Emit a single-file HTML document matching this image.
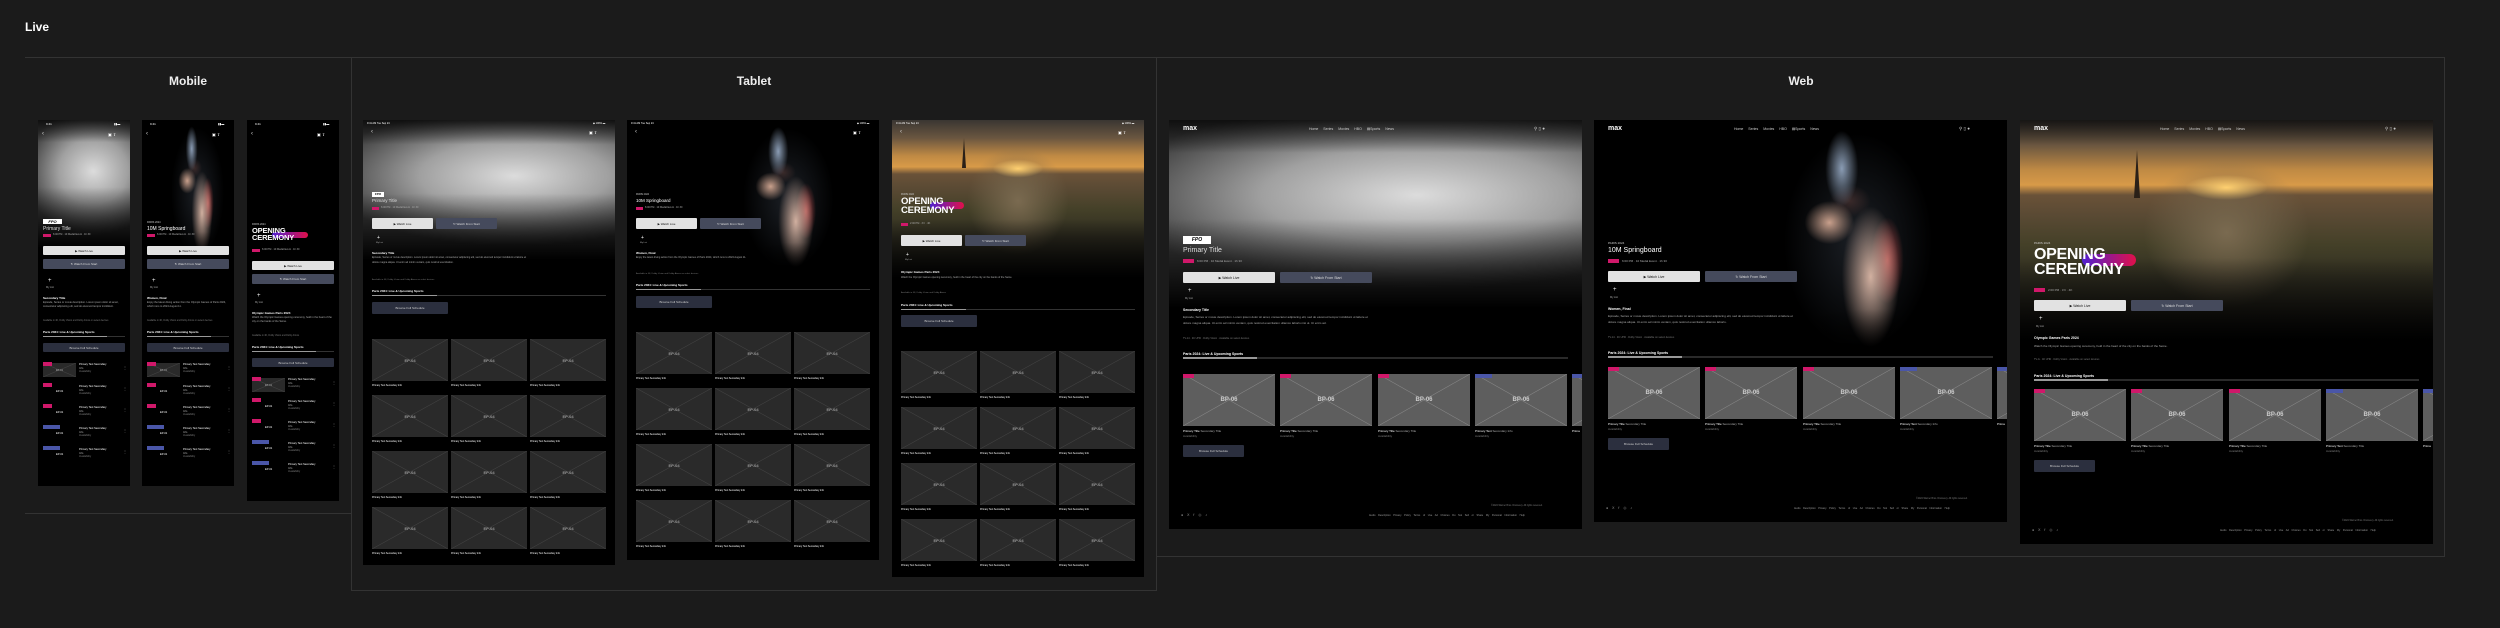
<!DOCTYPE html>
<html><head><meta charset="utf-8"><style>
body{margin:0;width:2500px;height:628px;background:#1b1b1b;position:relative;overflow:hidden;font-family:"Liberation Sans",sans-serif;color:#fff}
.a{position:absolute;white-space:nowrap}
.f{position:absolute;background:#000;overflow:hidden}
.box{position:absolute;border:1px solid #333}
.h{position:absolute;font-size:12px;font-weight:bold;color:#eee;transform:translateX(-50%)}
.gray{background:linear-gradient(180deg,rgba(0,0,0,.75) 0,rgba(0,0,0,0) 14%,rgba(0,0,0,0) 42%,#000 80%),radial-gradient(ellipse 75% 40% at 60% 32%,#dcdcdc,#a0a0a0 50%,#3a3a3a 100%)}
.diver{background:linear-gradient(180deg,rgba(0,0,0,0) 70%,#000 95%),radial-gradient(ellipse 4% 14% at 60% 18%,#8a9cb4,rgba(0,0,0,0) 100%),radial-gradient(ellipse 6% 8% at 57% 38%,#c9a08c,rgba(0,0,0,0) 100%),radial-gradient(ellipse 5% 6% at 62% 30%,#3a2a2a,rgba(0,0,0,0) 100%),radial-gradient(ellipse 7% 26% at 67% 58%,#d2b0a0,rgba(0,0,0,0) 100%),radial-gradient(ellipse 4% 16% at 71% 52%,#b04848,rgba(0,0,0,0) 100%),radial-gradient(ellipse 18% 40% at 64% 45%,#1c2026,#000 100%)}
.paris{background:linear-gradient(180deg,rgba(0,0,0,0) 55%,#000 88%),radial-gradient(ellipse 10% 5% at 50% 27%,#ffd070,rgba(0,0,0,0) 100%),radial-gradient(ellipse 20% 30% at 50% 45%,#7a6a50,rgba(0,0,0,0) 100%),linear-gradient(180deg,#3a3632 0%,#6a5640 10%,#c08a44 20%,#d89a48 26%,#6a5238 30%,#5a4a34 38%,#444028 50%,#2e2c20 65%,#111 100%)}
.tw{position:absolute;width:0;height:0;border-left:2px solid transparent;border-right:2px solid transparent;border-bottom:30px solid #2a2018}
.card{position:absolute;background:linear-gradient(to top right,rgba(0,0,0,0) calc(50% - .5px),#8a8a8a 50%,rgba(0,0,0,0) calc(50% + .5px)),linear-gradient(to bottom right,rgba(0,0,0,0) calc(50% - .5px),#8a8a8a 50%,rgba(0,0,0,0) calc(50% + .5px)),#5e5e5e;color:#ccc;font-weight:bold;display:flex;align-items:center;justify-content:center}
.dk{background:linear-gradient(to top right,rgba(0,0,0,0) calc(50% - .5px),#444 50%,rgba(0,0,0,0) calc(50% + .5px)),linear-gradient(to bottom right,rgba(0,0,0,0) calc(50% - .5px),#444 50%,rgba(0,0,0,0) calc(50% + .5px)),#2a2a2a;color:#999}
.wb{position:absolute;background:#e2e2e2;color:#111;display:flex;align-items:center;justify-content:center;border-radius:1px}
.db{position:absolute;background:#454a5c;color:#ddd;display:flex;align-items:center;justify-content:center;border-radius:1px}
.bb{position:absolute;background:#2b2f3e;color:#ccc;display:flex;align-items:center;justify-content:center;border-radius:1px}
.pk{position:absolute;background:#d0186a}
.up{position:absolute;background:#4a56a8}
.t{color:#aaa}
.oc{position:absolute;font-weight:bold;line-height:.92;color:#fff;letter-spacing:-.02em}
.ln{position:absolute;background:#333;height:1px}
.ln i{position:absolute;left:0;top:0;height:1px;background:#999}
</style></head><body>
<div class="a" style="left:25px;top:20px;font-size:12px;font-weight:bold">Live</div>

<div class="a" style="left:25px;top:57px;width:326px;height:1px;background:#333"></div>
<div class="a" style="left:25px;top:513px;width:326px;height:1px;background:#333"></div>
<div class="box" style="left:351px;top:57px;width:804px;height:532px"></div>
<div class="box" style="left:1156px;top:57px;width:1287px;height:498px"></div>
<div class="h" style="left:188px;top:74px">Mobile</div>
<div class="h" style="left:754px;top:74px">Tablet</div>
<div class="h" style="left:1801px;top:74px">Web</div>

<!-- ============ MOBILE ============ -->
<div class="f" style="left:38px;top:120px;width:92px;height:366px">
 <div class="a gray" style="left:0;top:0;width:92px;height:160px"></div>
 <div class="a" style="left:8px;top:2px;font-size:3px">9:41</div><div class="a" style="left:76px;top:2px;font-size:3px">▮▮▬</div>
 <div class="a" style="left:4px;top:11px;font-size:6px;color:#ddd">‹</div><div class="a" style="left:70px;top:12px;font-size:4px">▣ ⇧</div>
 <div class="a" style="left:5px;top:99px;width:19px;height:5px;background:#fff;color:#000;font-size:4px;font-weight:bold;font-style:italic;text-align:center;line-height:5px">FPO</div>
 <div class="a" style="left:5px;top:106px;font-size:5px;color:#ddd">Primary Title</div>
 <div class="pk" style="left:5px;top:114px;width:8px;height:3px"></div><div class="a t" style="left:15px;top:113px;font-size:2.5px">6:00 PM · 10 Medal Event · 1h 30</div>
 <div class="wb" style="left:5px;top:126px;width:82px;height:9px;font-size:3px">▶ Watch Live</div>
 <div class="db" style="left:5px;top:139px;width:82px;height:10px;font-size:3px">↻ Watch From Start</div>
 <div class="a" style="left:10px;top:158px;font-size:6px">+</div><div class="a t" style="left:8px;top:166px;font-size:2.5px">My List</div>
 <div class="a" style="left:5px;top:176px;font-size:3px;font-weight:bold">Secondary Title</div>
 <div class="a t" style="left:5px;top:181px;font-size:2.6px;line-height:4px;white-space:normal;width:82px">Episode, Series or movie description. Lorem ipsum dolor sit amet, consectetur adipiscing elit, sed do eiusmod tempor incididunt.</div>
 <div class="a" style="left:5px;top:200px;font-size:2.3px;color:#777">Available in 4K, Dolby Vision and Dolby Atmos on select devices</div>
 <div class="a" style="left:5px;top:210px;font-size:3px;font-weight:bold">Paris 2024: Live &amp; Upcoming Sports</div>
 <div class="ln" style="left:5px;top:216px;width:82px"><i style="width:64px"></i></div>
 <div class="bb" style="left:5px;top:223px;width:82px;height:9px;font-size:3px">Browse Full Schedule</div>
 <div class="card dk" style="left:5px;top:243px;width:33px;height:14px;font-size:2.5px">EP-01</div><div class="pk" style="left:5px;top:242px;width:9px;height:4px"></div>
 <div class="a" style="left:41px;top:243px;font-size:2.6px;line-height:3.5px">Primary Text Secondary<br><span class="t">Info</span><br><span style="color:#777">Availability</span></div><div class="a t" style="left:85px;top:245px;font-size:4px">⋮</div>
 <div class="pk" style="left:5px;top:263px;width:9px;height:4px"></div><div class="a" style="left:18px;top:270px;font-size:2.6px">EP-01</div>
 <div class="a" style="left:41px;top:265px;font-size:2.6px;line-height:3.5px">Primary Text Secondary<br><span class="t">Info</span><br><span style="color:#777">Availability</span></div><div class="a t" style="left:85px;top:266px;font-size:4px">⋮</div>
 <div class="pk" style="left:5px;top:284px;width:9px;height:4px"></div><div class="a" style="left:18px;top:291px;font-size:2.6px">EP-01</div>
 <div class="a" style="left:41px;top:286px;font-size:2.6px;line-height:3.5px">Primary Text Secondary<br><span class="t">Info</span><br><span style="color:#777">Availability</span></div><div class="a t" style="left:85px;top:287px;font-size:4px">⋮</div>
 <div class="up" style="left:5px;top:305px;width:17px;height:4px"></div><div class="a" style="left:18px;top:312px;font-size:2.6px">EP-01</div>
 <div class="a" style="left:41px;top:307px;font-size:2.6px;line-height:3.5px">Primary Text Secondary<br><span class="t">Info</span><br><span style="color:#777">Availability</span></div><div class="a t" style="left:85px;top:308px;font-size:4px">⋮</div>
 <div class="up" style="left:5px;top:326px;width:17px;height:4px"></div><div class="a" style="left:18px;top:333px;font-size:2.6px">EP-01</div>
 <div class="a" style="left:41px;top:328px;font-size:2.6px;line-height:3.5px">Primary Text Secondary<br><span class="t">Info</span><br><span style="color:#777">Availability</span></div><div class="a t" style="left:85px;top:329px;font-size:4px">⋮</div>
</div>
<div class="f" style="left:142px;top:120px;width:92px;height:366px">
 <div class="a diver" style="left:0;top:0;width:92px;height:160px;background-size:160% 100%;background-position:70% 0"></div>
 <div class="a" style="left:8px;top:2px;font-size:3px">9:41</div><div class="a" style="left:76px;top:2px;font-size:3px">▮▮▬</div>
 <div class="a" style="left:4px;top:11px;font-size:6px;color:#ddd">‹</div><div class="a" style="left:70px;top:12px;font-size:4px">▣ ⇧</div>
 <div class="a" style="left:5px;top:101px;font-size:2.5px;color:#ccc">PARIS 2024</div>
 <div class="a" style="left:5px;top:106px;font-size:5px">10M Springboard</div>
 <div class="pk" style="left:5px;top:114px;width:8px;height:3px"></div><div class="a t" style="left:15px;top:113px;font-size:2.5px">6:00 PM · 10 Medal Event · 1h 30</div>
 <div class="wb" style="left:5px;top:126px;width:82px;height:9px;font-size:3px">▶ Watch Live</div>
 <div class="db" style="left:5px;top:139px;width:82px;height:10px;font-size:3px">↻ Watch From Start</div>
 <div class="a" style="left:10px;top:158px;font-size:6px">+</div><div class="a t" style="left:8px;top:166px;font-size:2.5px">My List</div>
 <div class="a" style="left:5px;top:176px;font-size:3px;font-weight:bold">Women, Final</div>
 <div class="a t" style="left:5px;top:181px;font-size:2.6px;line-height:4px;white-space:normal;width:82px">Enjoy the latest diving action from the Olympic Games of Paris 2024, which runs to 2024 August 11.</div>
 <div class="a" style="left:5px;top:200px;font-size:2.3px;color:#777">Available in 4K, Dolby Vision and Dolby Atmos on select devices</div>
 <div class="a" style="left:5px;top:210px;font-size:3px;font-weight:bold">Paris 2024: Live &amp; Upcoming Sports</div>
 <div class="ln" style="left:5px;top:216px;width:82px"><i style="width:64px"></i></div>
 <div class="bb" style="left:5px;top:223px;width:82px;height:9px;font-size:3px">Browse Full Schedule</div>
 <div class="card dk" style="left:5px;top:243px;width:33px;height:14px;font-size:2.5px">EP-01</div><div class="pk" style="left:5px;top:242px;width:9px;height:4px"></div>
 <div class="a" style="left:41px;top:243px;font-size:2.6px;line-height:3.5px">Primary Text Secondary<br><span class="t">Info</span><br><span style="color:#777">Availability</span></div><div class="a t" style="left:85px;top:245px;font-size:4px">⋮</div>
 <div class="pk" style="left:5px;top:263px;width:9px;height:4px"></div><div class="a" style="left:18px;top:270px;font-size:2.6px">EP-01</div>
 <div class="a" style="left:41px;top:265px;font-size:2.6px;line-height:3.5px">Primary Text Secondary<br><span class="t">Info</span><br><span style="color:#777">Availability</span></div><div class="a t" style="left:85px;top:266px;font-size:4px">⋮</div>
 <div class="pk" style="left:5px;top:284px;width:9px;height:4px"></div><div class="a" style="left:18px;top:291px;font-size:2.6px">EP-01</div>
 <div class="a" style="left:41px;top:286px;font-size:2.6px;line-height:3.5px">Primary Text Secondary<br><span class="t">Info</span><br><span style="color:#777">Availability</span></div><div class="a t" style="left:85px;top:287px;font-size:4px">⋮</div>
 <div class="up" style="left:5px;top:305px;width:17px;height:4px"></div><div class="a" style="left:18px;top:312px;font-size:2.6px">EP-01</div>
 <div class="a" style="left:41px;top:307px;font-size:2.6px;line-height:3.5px">Primary Text Secondary<br><span class="t">Info</span><br><span style="color:#777">Availability</span></div><div class="a t" style="left:85px;top:308px;font-size:4px">⋮</div>
 <div class="up" style="left:5px;top:326px;width:17px;height:4px"></div><div class="a" style="left:18px;top:333px;font-size:2.6px">EP-01</div>
 <div class="a" style="left:41px;top:328px;font-size:2.6px;line-height:3.5px">Primary Text Secondary<br><span class="t">Info</span><br><span style="color:#777">Availability</span></div><div class="a t" style="left:85px;top:329px;font-size:4px">⋮</div>
</div>
<div class="f" style="left:247px;top:120px;width:92px;height:381px">
 <div class="a" style="left:8px;top:2px;font-size:3px">9:41</div><div class="a" style="left:76px;top:2px;font-size:3px">▮▮▬</div>
 <div class="a" style="left:4px;top:11px;font-size:6px;color:#ddd">‹</div><div class="a" style="left:70px;top:12px;font-size:4px">▣ ⇧</div>
 <div class="a" style="left:5px;top:103px;font-size:2.5px;color:#ccc">PARIS 2024</div>
 <div class="a" style="left:25px;top:112px;width:36px;height:6px;border-radius:3px;background:linear-gradient(90deg,#5020d0,#e0104a)"></div>
 <div class="oc" style="left:5px;top:108px;font-size:7.5px">OPENING<br>CEREMONY</div>
 <div class="pk" style="left:5px;top:129px;width:8px;height:3px"></div><div class="a t" style="left:15px;top:128px;font-size:2.5px">6:00 PM · 10 Medal Event · 1h 30</div>
 <div class="wb" style="left:5px;top:141px;width:82px;height:9px;font-size:3px">▶ Watch Live</div>
 <div class="db" style="left:5px;top:154px;width:82px;height:10px;font-size:3px">↻ Watch From Start</div>
 <div class="a" style="left:10px;top:173px;font-size:6px">+</div><div class="a t" style="left:8px;top:181px;font-size:2.5px">My List</div>
 <div class="a" style="left:5px;top:191px;font-size:3px;font-weight:bold">Olympic Games Paris 2024</div>
 <div class="a t" style="left:5px;top:196px;font-size:2.6px;line-height:4px;white-space:normal;width:82px">Watch the Olympic Games opening ceremony, held in the heart of the city on the banks of the Seine.</div>
 <div class="a" style="left:5px;top:215px;font-size:2.3px;color:#777">Available in 4K, Dolby Vision and Dolby Atmos</div>
 <div class="a" style="left:5px;top:225px;font-size:3px;font-weight:bold">Paris 2024: Live &amp; Upcoming Sports</div>
 <div class="ln" style="left:5px;top:231px;width:82px"><i style="width:64px"></i></div>
 <div class="bb" style="left:5px;top:238px;width:82px;height:9px;font-size:3px">Browse Full Schedule</div>
 <div class="card dk" style="left:5px;top:258px;width:33px;height:14px;font-size:2.5px">EP-01</div><div class="pk" style="left:5px;top:257px;width:9px;height:4px"></div>
 <div class="a" style="left:41px;top:258px;font-size:2.6px;line-height:3.5px">Primary Text Secondary<br><span class="t">Info</span><br><span style="color:#777">Availability</span></div><div class="a t" style="left:85px;top:260px;font-size:4px">⋮</div>
 <div class="pk" style="left:5px;top:278px;width:9px;height:4px"></div><div class="a" style="left:18px;top:285px;font-size:2.6px">EP-01</div>
 <div class="a" style="left:41px;top:280px;font-size:2.6px;line-height:3.5px">Primary Text Secondary<br><span class="t">Info</span><br><span style="color:#777">Availability</span></div><div class="a t" style="left:85px;top:281px;font-size:4px">⋮</div>
 <div class="pk" style="left:5px;top:299px;width:9px;height:4px"></div><div class="a" style="left:18px;top:306px;font-size:2.6px">EP-01</div>
 <div class="a" style="left:41px;top:301px;font-size:2.6px;line-height:3.5px">Primary Text Secondary<br><span class="t">Info</span><br><span style="color:#777">Availability</span></div><div class="a t" style="left:85px;top:302px;font-size:4px">⋮</div>
 <div class="up" style="left:5px;top:320px;width:17px;height:4px"></div><div class="a" style="left:18px;top:327px;font-size:2.6px">EP-01</div>
 <div class="a" style="left:41px;top:322px;font-size:2.6px;line-height:3.5px">Primary Text Secondary<br><span class="t">Info</span><br><span style="color:#777">Availability</span></div><div class="a t" style="left:85px;top:323px;font-size:4px">⋮</div>
 <div class="up" style="left:5px;top:341px;width:17px;height:4px"></div><div class="a" style="left:18px;top:348px;font-size:2.6px">EP-01</div>
 <div class="a" style="left:41px;top:343px;font-size:2.6px;line-height:3.5px">Primary Text Secondary<br><span class="t">Info</span><br><span style="color:#777">Availability</span></div><div class="a t" style="left:85px;top:344px;font-size:4px">⋮</div>
</div>

<!-- ============ TABLET ============ -->
<div class="f" style="left:363px;top:120px;width:252px;height:445px">
 <div class="a gray" style="left:0;top:0;width:252px;height:175px"></div>
 <div class="a" style="left:4px;top:2px;font-size:2.5px">9:41 AM Tue Sep 24</div><div class="a" style="left:230px;top:2px;font-size:2.5px">◆ 100% ▬</div>
 <div class="a" style="left:8px;top:9px;font-size:6px;color:#ddd">‹</div><div class="a" style="left:226px;top:10px;font-size:4px">▣ ⇧</div>
 <div class="a" style="left:9px;top:72px;width:12px;height:5px;background:#fff;color:#000;font-size:3px;font-weight:bold;font-style:italic;text-align:center;line-height:5px">FPO</div>
 <div class="a" style="left:9px;top:78px;font-size:4.5px;color:#ddd">Primary Title</div>
 <div class="pk" style="left:9px;top:87px;width:7px;height:3px"></div><div class="a t" style="left:18px;top:86px;font-size:2.5px">6:00 PM · 10 Medal Event · 1h 30</div>
 <div class="wb" style="left:9px;top:98px;width:61px;height:11px;font-size:3px">▶ Watch Live</div>
 <div class="db" style="left:73px;top:98px;width:61px;height:11px;font-size:3px">↻ Watch From Start</div>
 <div class="a" style="left:14px;top:115px;font-size:5px">+</div><div class="a t" style="left:13px;top:122px;font-size:2.2px">My List</div>
 <div class="a" style="left:9px;top:131px;font-size:3px;font-weight:bold">Secondary Title</div>
 <div class="a t" style="left:9px;top:136px;font-size:2.5px;line-height:4.5px;white-space:normal;width:160px">Episode, Series or movie description. Lorem ipsum dolor sit amet, consectetur adipiscing elit, sed do eiusmod tempor incididunt ut labore et dolore magna aliqua. Ut enim ad minim veniam, quis nostrud exercitation.</div>
 <div class="a" style="left:9px;top:159px;font-size:2.2px;color:#777">Available in 4K, Dolby Vision and Dolby Atmos on select devices</div>
 <div class="a" style="left:9px;top:169px;font-size:3px;font-weight:bold">Paris 2024: Live &amp; Upcoming Sports</div>
 <div class="ln" style="left:9px;top:175px;width:234px"><i style="width:65px"></i></div>
 <div class="bb" style="left:9px;top:182px;width:76px;height:12px;font-size:3px">Browse Full Schedule</div>
 <div class="card dk" style="left:9px;top:219px;width:76px;height:42px;font-size:4px">EP-04</div><div class="card dk" style="left:88px;top:219px;width:76px;height:42px;font-size:4px">EP-04</div><div class="card dk" style="left:167px;top:219px;width:76px;height:42px;font-size:4px">EP-04</div>
 <div class="a" style="left:9px;top:264px;font-size:2.4px">Primary Text Secondary Info</div><div class="a" style="left:88px;top:264px;font-size:2.4px">Primary Text Secondary Info</div><div class="a" style="left:167px;top:264px;font-size:2.4px">Primary Text Secondary Info</div>
 <div class="card dk" style="left:9px;top:275px;width:76px;height:42px;font-size:4px">EP-04</div><div class="card dk" style="left:88px;top:275px;width:76px;height:42px;font-size:4px">EP-04</div><div class="card dk" style="left:167px;top:275px;width:76px;height:42px;font-size:4px">EP-04</div>
 <div class="a" style="left:9px;top:320px;font-size:2.4px">Primary Text Secondary Info</div><div class="a" style="left:88px;top:320px;font-size:2.4px">Primary Text Secondary Info</div><div class="a" style="left:167px;top:320px;font-size:2.4px">Primary Text Secondary Info</div>
 <div class="card dk" style="left:9px;top:331px;width:76px;height:42px;font-size:4px">EP-04</div><div class="card dk" style="left:88px;top:331px;width:76px;height:42px;font-size:4px">EP-04</div><div class="card dk" style="left:167px;top:331px;width:76px;height:42px;font-size:4px">EP-04</div>
 <div class="a" style="left:9px;top:376px;font-size:2.4px">Primary Text Secondary Info</div><div class="a" style="left:88px;top:376px;font-size:2.4px">Primary Text Secondary Info</div><div class="a" style="left:167px;top:376px;font-size:2.4px">Primary Text Secondary Info</div>
 <div class="card dk" style="left:9px;top:387px;width:76px;height:42px;font-size:4px">EP-04</div><div class="card dk" style="left:88px;top:387px;width:76px;height:42px;font-size:4px">EP-04</div><div class="card dk" style="left:167px;top:387px;width:76px;height:42px;font-size:4px">EP-04</div>
 <div class="a" style="left:9px;top:432px;font-size:2.4px">Primary Text Secondary Info</div><div class="a" style="left:88px;top:432px;font-size:2.4px">Primary Text Secondary Info</div><div class="a" style="left:167px;top:432px;font-size:2.4px">Primary Text Secondary Info</div>
</div>
<div class="f" style="left:627px;top:120px;width:252px;height:440px">
 <div class="a diver" style="left:0;top:0;width:252px;height:175px"></div>
 <div class="a" style="left:4px;top:2px;font-size:2.5px">9:41 AM Tue Sep 24</div><div class="a" style="left:230px;top:2px;font-size:2.5px">◆ 100% ▬</div>
 <div class="a" style="left:8px;top:9px;font-size:6px;color:#ddd">‹</div><div class="a" style="left:226px;top:10px;font-size:4px">▣ ⇧</div>
 <div class="a" style="left:9px;top:73px;font-size:2.4px;color:#ccc">PARIS 2024</div>
 <div class="a" style="left:9px;top:78px;font-size:4.5px">10M Springboard</div>
 <div class="pk" style="left:9px;top:87px;width:7px;height:3px"></div><div class="a t" style="left:18px;top:86px;font-size:2.5px">6:00 PM · 10 Medal Event · 1h 30</div>
 <div class="wb" style="left:9px;top:98px;width:61px;height:11px;font-size:3px">▶ Watch Live</div>
 <div class="db" style="left:73px;top:98px;width:61px;height:11px;font-size:3px">↻ Watch From Start</div>
 <div class="a" style="left:14px;top:115px;font-size:5px">+</div><div class="a t" style="left:13px;top:122px;font-size:2.2px">My List</div>
 <div class="a" style="left:9px;top:131px;font-size:3px;font-weight:bold">Women, Final</div>
 <div class="a t" style="left:9px;top:136px;font-size:2.5px;line-height:4.5px;white-space:normal;width:160px">Enjoy the latest diving action from the Olympic Games of Paris 2024, which runs to 2024 August 11.</div>
 <div class="a" style="left:9px;top:153px;font-size:2.2px;color:#777">Available in 4K, Dolby Vision and Dolby Atmos on select devices</div>
 <div class="a" style="left:9px;top:163px;font-size:3px;font-weight:bold">Paris 2024: Live &amp; Upcoming Sports</div>
 <div class="ln" style="left:9px;top:169px;width:234px"><i style="width:65px"></i></div>
 <div class="bb" style="left:9px;top:176px;width:76px;height:12px;font-size:3px">Browse Full Schedule</div>
 <div class="card dk" style="left:9px;top:212px;width:76px;height:42px;font-size:4px">EP-04</div><div class="card dk" style="left:88px;top:212px;width:76px;height:42px;font-size:4px">EP-04</div><div class="card dk" style="left:167px;top:212px;width:76px;height:42px;font-size:4px">EP-04</div>
 <div class="a" style="left:9px;top:257px;font-size:2.4px">Primary Text Secondary Info</div><div class="a" style="left:88px;top:257px;font-size:2.4px">Primary Text Secondary Info</div><div class="a" style="left:167px;top:257px;font-size:2.4px">Primary Text Secondary Info</div>
 <div class="card dk" style="left:9px;top:268px;width:76px;height:42px;font-size:4px">EP-04</div><div class="card dk" style="left:88px;top:268px;width:76px;height:42px;font-size:4px">EP-04</div><div class="card dk" style="left:167px;top:268px;width:76px;height:42px;font-size:4px">EP-04</div>
 <div class="a" style="left:9px;top:313px;font-size:2.4px">Primary Text Secondary Info</div><div class="a" style="left:88px;top:313px;font-size:2.4px">Primary Text Secondary Info</div><div class="a" style="left:167px;top:313px;font-size:2.4px">Primary Text Secondary Info</div>
 <div class="card dk" style="left:9px;top:324px;width:76px;height:42px;font-size:4px">EP-04</div><div class="card dk" style="left:88px;top:324px;width:76px;height:42px;font-size:4px">EP-04</div><div class="card dk" style="left:167px;top:324px;width:76px;height:42px;font-size:4px">EP-04</div>
 <div class="a" style="left:9px;top:369px;font-size:2.4px">Primary Text Secondary Info</div><div class="a" style="left:88px;top:369px;font-size:2.4px">Primary Text Secondary Info</div><div class="a" style="left:167px;top:369px;font-size:2.4px">Primary Text Secondary Info</div>
 <div class="card dk" style="left:9px;top:380px;width:76px;height:42px;font-size:4px">EP-04</div><div class="card dk" style="left:88px;top:380px;width:76px;height:42px;font-size:4px">EP-04</div><div class="card dk" style="left:167px;top:380px;width:76px;height:42px;font-size:4px">EP-04</div>
 <div class="a" style="left:9px;top:425px;font-size:2.4px">Primary Text Secondary Info</div><div class="a" style="left:88px;top:425px;font-size:2.4px">Primary Text Secondary Info</div><div class="a" style="left:167px;top:425px;font-size:2.4px">Primary Text Secondary Info</div>
</div>
<div class="f" style="left:892px;top:120px;width:252px;height:457px">
 <div class="a paris" style="left:0;top:0;width:252px;height:180px"></div>
 <div class="tw" style="left:70px;top:18px"></div>
 <div class="a" style="left:4px;top:2px;font-size:2.5px">9:41 AM Tue Sep 24</div><div class="a" style="left:230px;top:2px;font-size:2.5px">◆ 100% ▬</div>
 <div class="a" style="left:8px;top:9px;font-size:6px;color:#ddd">‹</div><div class="a" style="left:226px;top:10px;font-size:4px">▣ ⇧</div>
 <div class="a" style="left:9px;top:73px;font-size:2.4px;color:#ccc">PARIS 2024</div>
 <div class="a" style="left:38px;top:82px;width:34px;height:7px;border-radius:4px;background:linear-gradient(90deg,#5020d0,#e0104a)"></div>
 <div class="oc" style="left:9px;top:78px;font-size:9.5px">OPENING<br>CEREMONY</div>
 <div class="pk" style="left:9px;top:103px;width:7px;height:3px"></div><div class="a t" style="left:18px;top:102px;font-size:2.5px">2:00 PM · 3 h · 4K</div>
 <div class="wb" style="left:9px;top:115px;width:61px;height:11px;font-size:3px">▶ Watch Live</div>
 <div class="db" style="left:73px;top:115px;width:61px;height:11px;font-size:3px">↻ Watch From Start</div>
 <div class="a" style="left:14px;top:132px;font-size:5px">+</div><div class="a t" style="left:13px;top:139px;font-size:2.2px">My List</div>
 <div class="a" style="left:9px;top:150px;font-size:3px;font-weight:bold">Olympic Games Paris 2024</div>
 <div class="a t" style="left:9px;top:156px;font-size:2.5px;line-height:4.5px;white-space:normal;width:160px">Watch the Olympic Games opening ceremony, held in the heart of the city on the banks of the Seine.</div>
 <div class="a" style="left:9px;top:172px;font-size:2.2px;color:#777">Available in 4K, Dolby Vision and Dolby Atmos</div>
 <div class="a" style="left:9px;top:183px;font-size:3px;font-weight:bold">Paris 2024: Live &amp; Upcoming Sports</div>
 <div class="ln" style="left:9px;top:189px;width:234px"><i style="width:65px"></i></div>
 <div class="bb" style="left:9px;top:195px;width:76px;height:12px;font-size:3px">Browse Full Schedule</div>
 <div class="card dk" style="left:9px;top:231px;width:76px;height:42px;font-size:4px">EP-04</div><div class="card dk" style="left:88px;top:231px;width:76px;height:42px;font-size:4px">EP-04</div><div class="card dk" style="left:167px;top:231px;width:76px;height:42px;font-size:4px">EP-04</div>
 <div class="a" style="left:9px;top:276px;font-size:2.4px">Primary Text Secondary Info</div><div class="a" style="left:88px;top:276px;font-size:2.4px">Primary Text Secondary Info</div><div class="a" style="left:167px;top:276px;font-size:2.4px">Primary Text Secondary Info</div>
 <div class="card dk" style="left:9px;top:287px;width:76px;height:42px;font-size:4px">EP-04</div><div class="card dk" style="left:88px;top:287px;width:76px;height:42px;font-size:4px">EP-04</div><div class="card dk" style="left:167px;top:287px;width:76px;height:42px;font-size:4px">EP-04</div>
 <div class="a" style="left:9px;top:332px;font-size:2.4px">Primary Text Secondary Info</div><div class="a" style="left:88px;top:332px;font-size:2.4px">Primary Text Secondary Info</div><div class="a" style="left:167px;top:332px;font-size:2.4px">Primary Text Secondary Info</div>
 <div class="card dk" style="left:9px;top:343px;width:76px;height:42px;font-size:4px">EP-04</div><div class="card dk" style="left:88px;top:343px;width:76px;height:42px;font-size:4px">EP-04</div><div class="card dk" style="left:167px;top:343px;width:76px;height:42px;font-size:4px">EP-04</div>
 <div class="a" style="left:9px;top:388px;font-size:2.4px">Primary Text Secondary Info</div><div class="a" style="left:88px;top:388px;font-size:2.4px">Primary Text Secondary Info</div><div class="a" style="left:167px;top:388px;font-size:2.4px">Primary Text Secondary Info</div>
 <div class="card dk" style="left:9px;top:399px;width:76px;height:42px;font-size:4px">EP-04</div><div class="card dk" style="left:88px;top:399px;width:76px;height:42px;font-size:4px">EP-04</div><div class="card dk" style="left:167px;top:399px;width:76px;height:42px;font-size:4px">EP-04</div>
 <div class="a" style="left:9px;top:444px;font-size:2.4px">Primary Text Secondary Info</div><div class="a" style="left:88px;top:444px;font-size:2.4px">Primary Text Secondary Info</div><div class="a" style="left:167px;top:444px;font-size:2.4px">Primary Text Secondary Info</div>
</div>

<!-- ============ WEB ============ -->
<div class="f" style="left:1169px;top:120px;width:413px;height:409px">
 <div class="a gray" style="left:0;top:0;width:413px;height:235px"></div>
 <div class="a" style="left:14px;top:5px;font-size:7px;font-weight:bold">max</div>
 <div class="a" style="left:140px;top:7px;font-size:3.5px;color:#ccc;word-spacing:4px">Home Series Movies HBO ▤Sports News</div>
 <div class="a" style="left:365px;top:6px;font-size:4.5px;color:#ccc">⚲ ▯ ●</div>
 <div class="a" style="left:14px;top:116px;width:28px;height:8px;background:#fff;color:#000;font-size:5px;font-weight:bold;font-style:italic;text-align:center;line-height:8px">FPO</div>
 <div class="a" style="left:14px;top:127px;font-size:7px;color:#ddd">Primary Title</div>
 <div class="pk" style="left:14px;top:139px;width:11px;height:4px"></div><div class="a t" style="left:28px;top:139px;font-size:3px">6:00 PM · 10 Medal Event · 1h 30</div>
 <div class="wb" style="left:14px;top:152px;width:92px;height:11px;font-size:3.5px">▶ Watch Live</div>
 <div class="db" style="left:111px;top:152px;width:92px;height:11px;font-size:3.5px">↻ Watch From Start</div>
 <div class="a" style="left:19px;top:168px;font-size:6px">+</div><div class="a t" style="left:16px;top:177px;font-size:2.5px">My List</div>
 <div class="a" style="left:14px;top:188px;font-size:3.5px;font-weight:bold">Secondary Title</div>
 <div class="a t" style="left:14px;top:194px;font-size:3px;line-height:6px;white-space:normal;width:190px">Episode, Series or movie description. Lorem ipsum dolor sit amet, consectetur adipiscing elit, sed do eiusmod tempor incididunt ut labore et dolore magna aliqua. Ut enim ad minim veniam, quis nostrud exercitation ullamco laboris nisi ut. Ut enim ad.</div>
 <div class="a" style="left:14px;top:217px;font-size:2.5px;color:#777">TV-14 · 4K UHD · Dolby Vision · Available on select devices</div>
 <div class="a" style="left:14px;top:232px;font-size:3.5px;font-weight:bold">Paris 2024: Live &amp; Upcoming Sports</div>
 <div class="ln" style="left:14px;top:237px;width:385px;height:1.5px;background:#2a2a2a"><i style="width:74px;height:1.5px"></i></div>
 <div class="card" style="left:14px;top:254px;width:92px;height:52px;font-size:6px">BP-06</div><div class="pk" style="left:14px;top:254px;width:11px;height:4px"></div>
 <div class="card" style="left:111px;top:254px;width:92px;height:52px;font-size:6px">BP-06</div><div class="pk" style="left:111px;top:254px;width:11px;height:4px"></div>
 <div class="card" style="left:209px;top:254px;width:92px;height:52px;font-size:6px">BP-06</div><div class="pk" style="left:209px;top:254px;width:11px;height:4px"></div>
 <div class="card" style="left:306px;top:254px;width:92px;height:52px;font-size:6px">BP-06</div><div class="up" style="left:306px;top:254px;width:17px;height:4px"></div>
 <div class="card" style="left:403px;top:254px;width:92px;height:52px;font-size:6px"></div><div class="up" style="left:403px;top:254px;width:17px;height:4px"></div>
 <div class="a" style="left:14px;top:309px;font-size:3px;line-height:5px">Primary Title <span class="t">Secondary Title</span><br><span style="color:#777">Availability</span></div>
 <div class="a" style="left:111px;top:309px;font-size:3px;line-height:5px">Primary Title <span class="t">Secondary Title</span><br><span style="color:#777">Availability</span></div>
 <div class="a" style="left:209px;top:309px;font-size:3px;line-height:5px">Primary Title <span class="t">Secondary Title</span><br><span style="color:#777">Availability</span></div>
 <div class="a" style="left:306px;top:309px;font-size:3px;line-height:5px">Primary Text <span class="t">Secondary Info</span><br><span style="color:#777">Availability</span></div>
 <div class="a" style="left:403px;top:309px;font-size:3px">Prima</div>
 <div class="bb" style="left:14px;top:325px;width:61px;height:12px;font-size:3px">Browse Full Schedule</div>
 <div class="a" style="left:322px;top:385px;font-size:2.3px;color:#777">©2024 Warner Bros. Discovery. All rights reserved.</div>
 <div class="a" style="left:12px;top:393px;font-size:3.5px;color:#999;word-spacing:3px">● X f ◎ ♪</div>
 <div class="a" style="left:200px;top:394px;font-size:2.5px;color:#999;word-spacing:2px">Audio Description  Privacy Policy  Terms of Use  Ad Choices  Do Not Sell or Share My Personal Information  Help</div>
</div>
<div class="f" style="left:1594px;top:120px;width:413px;height:402px">
 <div class="a diver" style="left:0;top:0;width:413px;height:270px"></div>
 <div class="a" style="left:14px;top:5px;font-size:7px;font-weight:bold">max</div>
 <div class="a" style="left:140px;top:7px;font-size:3.5px;color:#ccc;word-spacing:4px">Home Series Movies HBO ▤Sports News</div>
 <div class="a" style="left:365px;top:6px;font-size:4.5px;color:#ccc">⚲ ▯ ●</div>
 <div class="a" style="left:14px;top:121px;font-size:3px;color:#ccc">PARIS 2024</div>
 <div class="a" style="left:14px;top:127px;font-size:7px">10M Springboard</div>
 <div class="pk" style="left:14px;top:139px;width:11px;height:4px"></div><div class="a t" style="left:28px;top:139px;font-size:3px">6:00 PM · 10 Medal Event · 1h 30</div>
 <div class="wb" style="left:14px;top:151px;width:92px;height:11px;font-size:3.5px">▶ Watch Live</div>
 <div class="db" style="left:111px;top:151px;width:92px;height:11px;font-size:3.5px">↻ Watch From Start</div>
 <div class="a" style="left:19px;top:167px;font-size:6px">+</div><div class="a t" style="left:16px;top:176px;font-size:2.5px">My List</div>
 <div class="a" style="left:14px;top:187px;font-size:3.5px;font-weight:bold">Women, Final</div>
 <div class="a t" style="left:14px;top:193px;font-size:3px;line-height:6px;white-space:normal;width:190px">Episode, Series or movie description. Lorem ipsum dolor sit amet, consectetur adipiscing elit, sed do eiusmod tempor incididunt ut labore et dolore magna aliqua. Ut enim ad minim veniam, quis nostrud exercitation ullamco laboris.</div>
 <div class="a" style="left:14px;top:216px;font-size:2.5px;color:#777">TV-14 · 4K UHD · Dolby Vision · Available on select devices</div>
 <div class="a" style="left:14px;top:231px;font-size:3.5px;font-weight:bold">Paris 2024: Live &amp; Upcoming Sports</div>
 <div class="ln" style="left:14px;top:236px;width:385px;height:1.5px;background:#2a2a2a"><i style="width:74px;height:1.5px"></i></div>
 <div class="card" style="left:14px;top:247px;width:92px;height:52px;font-size:6px">BP-06</div><div class="pk" style="left:14px;top:247px;width:11px;height:4px"></div>
 <div class="card" style="left:111px;top:247px;width:92px;height:52px;font-size:6px">BP-06</div><div class="pk" style="left:111px;top:247px;width:11px;height:4px"></div>
 <div class="card" style="left:209px;top:247px;width:92px;height:52px;font-size:6px">BP-06</div><div class="pk" style="left:209px;top:247px;width:11px;height:4px"></div>
 <div class="card" style="left:306px;top:247px;width:92px;height:52px;font-size:6px">BP-06</div><div class="up" style="left:306px;top:247px;width:17px;height:4px"></div>
 <div class="card" style="left:403px;top:247px;width:92px;height:52px;font-size:6px"></div><div class="up" style="left:403px;top:247px;width:17px;height:4px"></div>
 <div class="a" style="left:14px;top:302px;font-size:3px;line-height:5px">Primary Title <span class="t">Secondary Title</span><br><span style="color:#777">Availability</span></div>
 <div class="a" style="left:111px;top:302px;font-size:3px;line-height:5px">Primary Title <span class="t">Secondary Title</span><br><span style="color:#777">Availability</span></div>
 <div class="a" style="left:209px;top:302px;font-size:3px;line-height:5px">Primary Title <span class="t">Secondary Title</span><br><span style="color:#777">Availability</span></div>
 <div class="a" style="left:306px;top:302px;font-size:3px;line-height:5px">Primary Text <span class="t">Secondary Info</span><br><span style="color:#777">Availability</span></div>
 <div class="a" style="left:403px;top:302px;font-size:3px">Prima</div>
 <div class="bb" style="left:14px;top:318px;width:61px;height:12px;font-size:3px">Browse Full Schedule</div>
 <div class="a" style="left:322px;top:378px;font-size:2.3px;color:#777">©2024 Warner Bros. Discovery. All rights reserved.</div>
 <div class="a" style="left:12px;top:386px;font-size:3.5px;color:#999;word-spacing:3px">● X f ◎ ♪</div>
 <div class="a" style="left:200px;top:387px;font-size:2.5px;color:#999;word-spacing:2px">Audio Description  Privacy Policy  Terms of Use  Ad Choices  Do Not Sell or Share My Personal Information  Help</div>
</div>
<div class="f" style="left:2020px;top:120px;width:413px;height:424px">
 <div class="a paris" style="left:0;top:0;width:413px;height:250px"></div>
 <div class="tw" style="left:114px;top:30px;border-bottom-width:48px;border-left-width:3px;border-right-width:3px"></div>
 <div class="a" style="left:0;top:0;width:413px;height:25px;background:linear-gradient(180deg,rgba(0,0,0,.6),rgba(0,0,0,0))"></div>
 <div class="a" style="left:14px;top:5px;font-size:7px;font-weight:bold">max</div>
 <div class="a" style="left:140px;top:7px;font-size:3.5px;color:#ccc;word-spacing:4px">Home Series Movies HBO ▤Sports News</div>
 <div class="a" style="left:365px;top:6px;font-size:4.5px;color:#ccc">⚲ ▯ ●</div>
 <div class="a" style="left:14px;top:121px;font-size:3px;color:#ccc">PARIS 2024</div>
 <div class="a" style="left:62px;top:134px;width:54px;height:12px;border-radius:6px;background:linear-gradient(90deg,#5020d0,#e0104a)"></div>
 <div class="oc" style="left:14px;top:128px;font-size:16px">OPENING<br>CEREMONY</div>
 <div class="pk" style="left:14px;top:168px;width:11px;height:4px"></div><div class="a t" style="left:28px;top:168px;font-size:3px">2:00 PM · 3 h · 4K</div>
 <div class="wb" style="left:14px;top:180px;width:92px;height:11px;font-size:3.5px">▶ Watch Live</div>
 <div class="db" style="left:111px;top:180px;width:92px;height:11px;font-size:3.5px">↻ Watch From Start</div>
 <div class="a" style="left:19px;top:196px;font-size:6px">+</div><div class="a t" style="left:16px;top:205px;font-size:2.5px">My List</div>
 <div class="a" style="left:14px;top:216px;font-size:3.5px;font-weight:bold">Olympic Games Paris 2024</div>
 <div class="a t" style="left:14px;top:223px;font-size:3px;line-height:6px;white-space:normal;width:190px">Watch the Olympic Games opening ceremony, held in the heart of the city on the banks of the Seine.</div>
 <div class="a" style="left:14px;top:238px;font-size:2.5px;color:#777">TV-G · 4K UHD · Dolby Vision · Available on select devices</div>
 <div class="a" style="left:14px;top:254px;font-size:3.5px;font-weight:bold">Paris 2024: Live &amp; Upcoming Sports</div>
 <div class="ln" style="left:14px;top:259px;width:385px;height:1.5px;background:#2a2a2a"><i style="width:74px;height:1.5px"></i></div>
 <div class="card" style="left:14px;top:269px;width:92px;height:52px;font-size:6px">BP-06</div><div class="pk" style="left:14px;top:269px;width:11px;height:4px"></div>
 <div class="card" style="left:111px;top:269px;width:92px;height:52px;font-size:6px">BP-06</div><div class="pk" style="left:111px;top:269px;width:11px;height:4px"></div>
 <div class="card" style="left:209px;top:269px;width:92px;height:52px;font-size:6px">BP-06</div><div class="pk" style="left:209px;top:269px;width:11px;height:4px"></div>
 <div class="card" style="left:306px;top:269px;width:92px;height:52px;font-size:6px">BP-06</div><div class="up" style="left:306px;top:269px;width:17px;height:4px"></div>
 <div class="card" style="left:403px;top:269px;width:92px;height:52px;font-size:6px"></div><div class="up" style="left:403px;top:269px;width:17px;height:4px"></div>
 <div class="a" style="left:14px;top:324px;font-size:3px;line-height:5px">Primary Title <span class="t">Secondary Title</span><br><span style="color:#777">Availability</span></div>
 <div class="a" style="left:111px;top:324px;font-size:3px;line-height:5px">Primary Title <span class="t">Secondary Title</span><br><span style="color:#777">Availability</span></div>
 <div class="a" style="left:209px;top:324px;font-size:3px;line-height:5px">Primary Title <span class="t">Secondary Title</span><br><span style="color:#777">Availability</span></div>
 <div class="a" style="left:306px;top:324px;font-size:3px;line-height:5px">Primary Text <span class="t">Secondary Title</span><br><span style="color:#777">Availability</span></div>
 <div class="a" style="left:403px;top:324px;font-size:3px">Prima</div>
 <div class="bb" style="left:14px;top:340px;width:61px;height:12px;font-size:3px">Browse Full Schedule</div>
 <div class="a" style="left:322px;top:400px;font-size:2.3px;color:#777">©2024 Warner Bros. Discovery. All rights reserved.</div>
 <div class="a" style="left:12px;top:408px;font-size:3.5px;color:#999;word-spacing:3px">● X f ◎ ♪</div>
 <div class="a" style="left:200px;top:409px;font-size:2.5px;color:#999;word-spacing:2px">Audio Description  Privacy Policy  Terms of Use  Ad Choices  Do Not Sell or Share My Personal Information  Help</div>
</div>
</body></html>
